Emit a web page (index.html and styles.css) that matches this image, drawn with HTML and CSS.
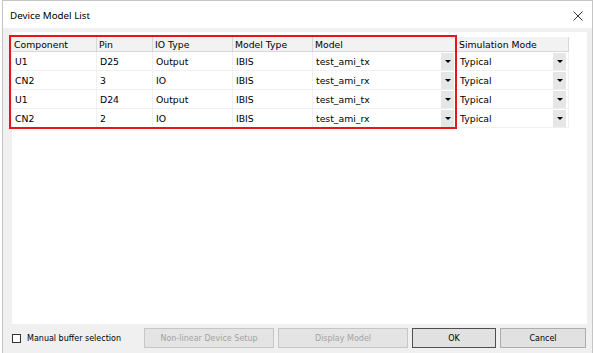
FILE: index.html
```html
<!DOCTYPE html>
<html lang="en">
  <head>
    <meta charset="UTF-8" />
    <title>Device Model List</title>
    <link rel="stylesheet" href="styles.css">
  </head>
  <body>
    <div class="window">
      <div class="titlebar">
        <span class="title">Device Model List</span>
        <svg class="close" width="10" height="10" viewBox="0 0 10 10">
          <path d="M0.5 0.5 L9.5 9.5 M9.5 0.5 L0.5 9.5" stroke="#333" stroke-width="1" fill="none" />
        </svg>
      </div>
      <div class="dialog-body">
        <div class="list">
          <div class="grid">
            <div class="head">Component</div>
            <div class="head">Pin</div>
            <div class="head">IO Type</div>
            <div class="head">Model Type</div>
            <div class="head">Model</div>
            <div class="head">Simulation Mode</div>

            <div class="cell">U1</div>
            <div class="cell">D25</div>
            <div class="cell">Output</div>
            <div class="cell">IBIS</div>
            <div class="cell combo"><span>test_ami_tx</span><span class="drop"></span></div>
            <div class="cell combo"><span>Typical</span><span class="drop"></span></div>

            <div class="cell">CN2</div>
            <div class="cell">3</div>
            <div class="cell">IO</div>
            <div class="cell">IBIS</div>
            <div class="cell combo"><span>test_ami_rx</span><span class="drop"></span></div>
            <div class="cell combo"><span>Typical</span><span class="drop"></span></div>

            <div class="cell">U1</div>
            <div class="cell">D24</div>
            <div class="cell">Output</div>
            <div class="cell">IBIS</div>
            <div class="cell combo"><span>test_ami_tx</span><span class="drop"></span></div>
            <div class="cell combo"><span>Typical</span><span class="drop"></span></div>

            <div class="cell">CN2</div>
            <div class="cell">2</div>
            <div class="cell">IO</div>
            <div class="cell">IBIS</div>
            <div class="cell combo"><span>test_ami_rx</span><span class="drop"></span></div>
            <div class="cell combo"><span>Typical</span><span class="drop"></span></div>
          </div>
          <!-- red annotation box over the first five columns -->
          <div class="highlight"></div>
        </div>
        <div class="footer">
          <label class="check"><span class="box"></span>Manual buffer selection</label>
          <div class="buttons">
            <button class="btn wide" disabled>Non-linear Device Setup</button>
            <button class="btn wide" disabled>Display Model</button>
            <button class="btn ok">OK</button>
            <button class="btn cancel">Cancel</button>
          </div>
        </div>
      </div>
    </div>
  </body>
</html>
```

FILE: styles.css
```css
body {
  margin: 0;
  background: #ffffff;
  font-family: "DejaVu Sans", sans-serif;
}
.window {
  width: 591px;
  height: 353px;
  margin-left: 2px;
  border: 1px solid #c4c4c4;
  border-bottom: none;
  box-sizing: border-box;
  display: flex;
  flex-direction: column;
}
.titlebar {
  height: 27px;
  flex-shrink: 0;
  background: #ffffff;
  display: flex;
  align-items: center;
  justify-content: space-between;
  padding: 0 9px 0 7px;
}
.title {
  font-family: "Noto Sans", sans-serif;
  font-size: 9.8px;
  color: #000;
  margin-top: 1px;
}
.close {
  display: block;
  margin-top: 2px;
}
.dialog-body {
  flex: 1;
  background: #f0f0f0;
  padding: 4px 5px 0 9px;
  display: flex;
  flex-direction: column;
}
.list {
  flex: 1;
  background: #ffffff;
  position: relative;
  padding-top: 5px;
}
.grid {
  display: grid;
  grid-template-columns: 85px 56px 80px 80px 144px 112px;
  grid-auto-rows: 19px;
  grid-template-rows: 15px;
  font-size: 9.3px;
  color: #000;
}
.head {
  background: #f2f2f2;
  border-right: 1px solid #d8d8d8;
  border-bottom: 1px solid #d8d8d8;
  padding-left: 2px;
  display: flex;
  align-items: center;
  white-space: nowrap;
}
.cell {
  border-right: 1px solid #f0f0f0;
  border-bottom: 1px solid #f0f0f0;
  padding-left: 3px;
  display: flex;
  align-items: center;
  white-space: nowrap;
}
.combo {
  justify-content: space-between;
  padding-right: 2px;
}
.drop {
  width: 13px;
  height: 17px;
  background: #e6e6e6;
  display: flex;
  align-items: center;
  justify-content: center;
}
.drop::after {
  content: "";
  border-left: 3px solid transparent;
  border-right: 3px solid transparent;
  border-top: 3px solid #000;
}
.highlight {
  position: absolute;
  left: -3px;
  top: 3px;
  width: 448px;
  height: 94px;
  border: 2px solid #e8141c;
  box-sizing: border-box;
}
.footer {
  height: 29px;
  display: flex;
  align-items: center;
  font-size: 8px;
  padding-bottom: 1px;
  box-sizing: border-box;
}
.check {
  flex: 1;
  display: flex;
  align-items: center;
  color: #000;
}
.box {
  width: 9px;
  height: 9px;
  border: 1px solid #333;
  background: #fff;
  box-sizing: border-box;
  margin-right: 6px;
}
.buttons {
  display: flex;
  gap: 4px;
  margin-right: 1px;
}
.btn {
  height: 20px;
  font-family: "DejaVu Sans", sans-serif;
  font-size: 8px;
  background: #e1e1e1;
  border: 1px solid #adadad;
  color: #000;
  padding: 0;
}
.btn:disabled {
  color: #a3a3a3;
  border-color: #c6c6c6;
  background: #e4e4e4;
}
.wide {
  width: 130px;
}
.ok {
  width: 84px;
  border-color: #4f4f4f;
}
.cancel {
  width: 86px;
}
```
